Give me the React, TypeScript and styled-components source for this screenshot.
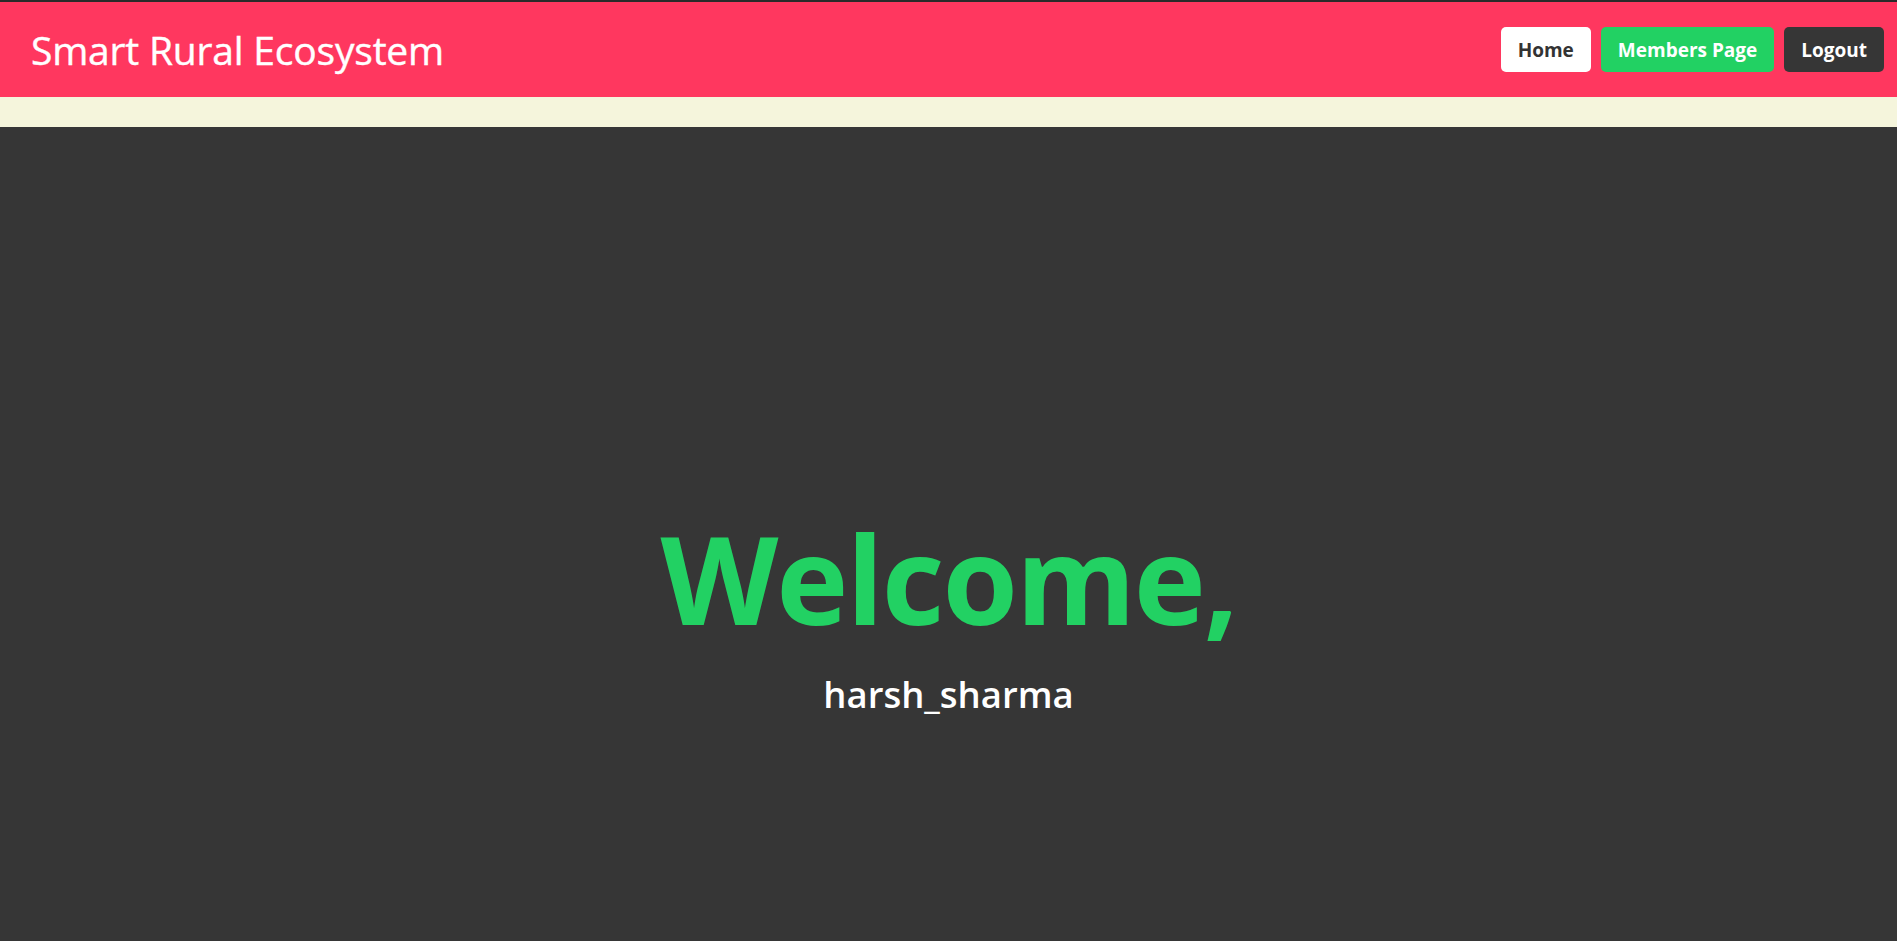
import React from "react";
import styled, { createGlobalStyle } from "styled-components";

const Global = createGlobalStyle`
  html, body { margin: 0; padding: 0; }
  body {
    background: #363636;
    font-family: "Open Sans", "Noto Sans", sans-serif;
  }
`;

const Page = styled.div`
  display: flex;
  flex-direction: column;
  min-height: 100vh;
  background: #363636;
`;

const Header = styled.header`
  display: flex;
  align-items: center;
  justify-content: space-between;
  height: 95px;
  border-top: 2px solid #2a2a2a;
  background: #ff375f;
  padding: 0 13px 0 31px;
`;

const Brand = styled.h1`
  margin: 0;
  color: #ffffff;
  font-size: 39px;
  font-weight: 400;
  letter-spacing: -0.2px;
  -webkit-text-stroke: 0.4px #ffffff;
`;

const Nav = styled.nav`
  display: flex;
  gap: 10px;
`;

const NavButton = styled.button<{ $bg: string; $fg: string }>`
  height: 45px;
  padding: 0 17px;
  border: none;
  border-radius: 5px;
  background: ${(p) => p.$bg};
  color: ${(p) => p.$fg};
  font-family: inherit;
  font-size: 19px;
  font-weight: 700;
  cursor: pointer;
`;

const Strip = styled.div`
  height: 30px;
  background: #f5f5dc;
`;

const Main = styled.main`
  flex: 1;
  display: flex;
  flex-direction: column;
  align-items: center;
  padding-top: 378px;
`;

const Welcome = styled.h2`
  margin: 0;
  color: #22d163;
  font-size: 122px;
  font-weight: 700;
  line-height: 1.2;
  letter-spacing: -2px;
`;

const UserName = styled.h3`
  margin: 20px 0 0;
  color: #ffffff;
  font-size: 36.5px;
  font-weight: 600;
  line-height: 1.3;
`;

export default function App() {
  return (
    <Page>
      <Global />
      <Header>
        <Brand>Smart Rural Ecosystem</Brand>
        <Nav>
          <NavButton $bg="#ffffff" $fg="#333333">Home</NavButton>
          <NavButton $bg="#22d163" $fg="#ffffff">Members Page</NavButton>
          <NavButton $bg="#363636" $fg="#ffffff">Logout</NavButton>
        </Nav>
      </Header>
      <Strip />
      <Main>
        <Welcome>Welcome,</Welcome>
        <UserName>harsh_sharma</UserName>
      </Main>
    </Page>
  );
}
